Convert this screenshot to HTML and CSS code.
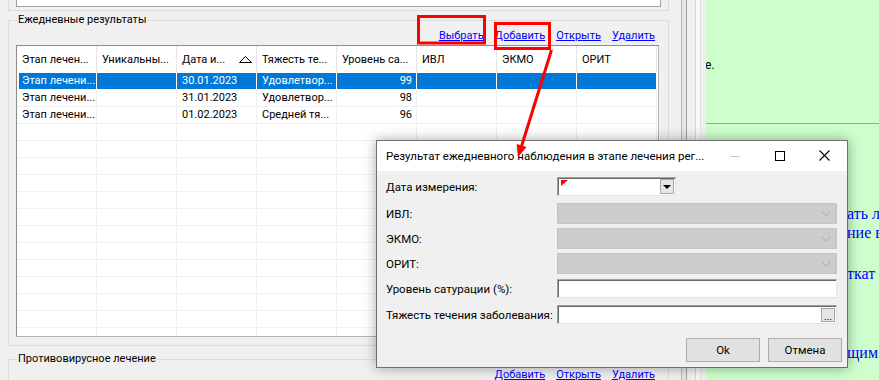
FILE: index.html
```html
<!DOCTYPE html>
<html lang="ru">
<head>
    <meta charset="UTF-8">
    <meta name="viewport" content="width=device-width, initial-scale=1.0">
    <title>Ежедневные результаты</title>
    <link rel="stylesheet" href="styles.css">
</head>
<body>

<div class="screen">
    <div class="workspace">
        <div class="top-group">
            <div class="top-box"></div>
        </div>

        <fieldset class="group group-daily">
            <legend>Ежедневные результаты</legend>
            <div class="links">
                <a href="#">Выбрать</a>
                <a href="#">Добавить</a>
                <a href="#">Открыть</a>
                <a href="#">Удалить</a>
            </div>
            <div class="grid">
                <div class="grid-row grid-head">
                    <div class="cell">Этап лечен...</div>
                    <div class="cell">Уникальны...</div>
                    <div class="cell cell-sort">Дата и...
                        <svg width="13" height="8" viewBox="0 0 13 8"><path d="M0.5 7.5 L6.5 1.5 L12.5 7.5 Z" fill="none" stroke="#000"/></svg>
                    </div>
                    <div class="cell">Тяжесть те...</div>
                    <div class="cell">Уровень са...</div>
                    <div class="cell">ИВЛ</div>
                    <div class="cell">ЭКМО</div>
                    <div class="cell">ОРИТ</div>
                </div>
                <div class="grid-row selected">
                    <div class="cell">Этап лечени...</div>
                    <div class="cell"></div>
                    <div class="cell">30.01.2023</div>
                    <div class="cell">Удовлетвор...</div>
                    <div class="cell num">99</div>
                    <div class="cell"></div>
                    <div class="cell"></div>
                    <div class="cell"></div>
                </div>
                <div class="grid-row">
                    <div class="cell">Этап лечени...</div>
                    <div class="cell"></div>
                    <div class="cell">31.01.2023</div>
                    <div class="cell">Удовлетвор...</div>
                    <div class="cell num">98</div>
                    <div class="cell"></div>
                    <div class="cell"></div>
                    <div class="cell"></div>
                </div>
                <div class="grid-row">
                    <div class="cell">Этап лечени...</div>
                    <div class="cell"></div>
                    <div class="cell">01.02.2023</div>
                    <div class="cell">Средней тя...</div>
                    <div class="cell num">96</div>
                    <div class="cell"></div>
                    <div class="cell"></div>
                    <div class="cell"></div>
                </div>
                <div class="grid-row"><div class="cell"></div><div class="cell"></div><div class="cell"></div><div class="cell"></div><div class="cell"></div><div class="cell"></div><div class="cell"></div><div class="cell"></div></div>
                <div class="grid-row"><div class="cell"></div><div class="cell"></div><div class="cell"></div><div class="cell"></div><div class="cell"></div><div class="cell"></div><div class="cell"></div><div class="cell"></div></div>
                <div class="grid-row"><div class="cell"></div><div class="cell"></div><div class="cell"></div><div class="cell"></div><div class="cell"></div><div class="cell"></div><div class="cell"></div><div class="cell"></div></div>
                <div class="grid-row"><div class="cell"></div><div class="cell"></div><div class="cell"></div><div class="cell"></div><div class="cell"></div><div class="cell"></div><div class="cell"></div><div class="cell"></div></div>
                <div class="grid-row"><div class="cell"></div><div class="cell"></div><div class="cell"></div><div class="cell"></div><div class="cell"></div><div class="cell"></div><div class="cell"></div><div class="cell"></div></div>
                <div class="grid-row"><div class="cell"></div><div class="cell"></div><div class="cell"></div><div class="cell"></div><div class="cell"></div><div class="cell"></div><div class="cell"></div><div class="cell"></div></div>
                <div class="grid-row"><div class="cell"></div><div class="cell"></div><div class="cell"></div><div class="cell"></div><div class="cell"></div><div class="cell"></div><div class="cell"></div><div class="cell"></div></div>
                <div class="grid-row"><div class="cell"></div><div class="cell"></div><div class="cell"></div><div class="cell"></div><div class="cell"></div><div class="cell"></div><div class="cell"></div><div class="cell"></div></div>
                <div class="grid-row"><div class="cell"></div><div class="cell"></div><div class="cell"></div><div class="cell"></div><div class="cell"></div><div class="cell"></div><div class="cell"></div><div class="cell"></div></div>
                <div class="grid-row"><div class="cell"></div><div class="cell"></div><div class="cell"></div><div class="cell"></div><div class="cell"></div><div class="cell"></div><div class="cell"></div><div class="cell"></div></div>
                <div class="grid-row"><div class="cell"></div><div class="cell"></div><div class="cell"></div><div class="cell"></div><div class="cell"></div><div class="cell"></div><div class="cell"></div><div class="cell"></div></div>
                <div class="grid-row"><div class="cell"></div><div class="cell"></div><div class="cell"></div><div class="cell"></div><div class="cell"></div><div class="cell"></div><div class="cell"></div><div class="cell"></div></div>
                <div class="grid-row"><div class="cell"></div><div class="cell"></div><div class="cell"></div><div class="cell"></div><div class="cell"></div><div class="cell"></div><div class="cell"></div><div class="cell"></div></div>
            </div>
        </fieldset>

        <fieldset class="group group-antiviral">
            <legend>Противовирусное лечение</legend>
            <div class="links">
                <a href="#">Добавить</a>
                <a href="#">Открыть</a>
                <a href="#">Удалить</a>
            </div>
        </fieldset>
    </div>

    <div class="splitter">
        <div class="splitter-bar"></div>
        <div class="splitter-edge"></div>
    </div>

    <div class="green-panel">
        <div class="green-note">е.</div>
        <hr class="green-rule">
        <p class="green-line first">ать лечение</p>
        <p class="green-line">ние в</p>
        <p class="green-line gap">ткат</p>
        <p class="green-line last">щим</p>
    </div>
</div>

<div class="dialog">
    <div class="dialog-title">
        <span class="dialog-caption">Результат ежедневного наблюдения в этапе лечения рег...</span>
        <div class="title-buttons">
            <span class="tb"><svg width="10" height="10" viewBox="0 0 10 10"><line x1="0" y1="5.5" x2="10" y2="5.5" stroke="#c6c6c6"/></svg></span>
            <span class="tb"><svg width="10" height="10" viewBox="0 0 10 10"><rect x="0.5" y="0.5" width="9" height="9" fill="none" stroke="#000"/></svg></span>
            <span class="tb"><svg width="11" height="11" viewBox="0 0 11 11"><path d="M0.5 0.5 L10.5 10.5 M10.5 0.5 L0.5 10.5" stroke="#000" stroke-width="1.1"/></svg></span>
        </div>
    </div>
    <div class="dialog-body">
        <div class="form-row row-date">
            <label>Дата измерения:</label>
            <div class="datepicker">
                <span class="flag"></span>
                <span class="drop-btn"><span class="drop-arrow"></span></span>
            </div>
        </div>
        <div class="form-row row-gap">
            <label>ИВЛ:</label>
            <div class="combo">
                <svg width="10" height="6" viewBox="0 0 10 6"><path d="M0.5 0.5 L5 5 L9.5 0.5" fill="none" stroke="#ababab"/></svg>
            </div>
        </div>
        <div class="form-row">
            <label>ЭКМО:</label>
            <div class="combo">
                <svg width="10" height="6" viewBox="0 0 10 6"><path d="M0.5 0.5 L5 5 L9.5 0.5" fill="none" stroke="#ababab"/></svg>
            </div>
        </div>
        <div class="form-row">
            <label>ОРИТ:</label>
            <div class="combo">
                <svg width="10" height="6" viewBox="0 0 10 6"><path d="M0.5 0.5 L5 5 L9.5 0.5" fill="none" stroke="#ababab"/></svg>
            </div>
        </div>
        <div class="form-row row-sat">
            <label>Уровень сатурации (%):</label>
            <div class="textbox"></div>
        </div>
        <div class="form-row row-gap">
            <label>Тяжесть течения заболевания:</label>
            <div class="textbox">
                <span class="dots-btn">...</span>
            </div>
        </div>
        <div class="dialog-buttons">
            <button class="win-btn">Ok</button>
            <button class="win-btn">Отмена</button>
        </div>
    </div>
</div>

<svg class="annotations" width="879" height="380" viewBox="0 0 879 380">
    <rect x="418.5" y="16.5" width="66" height="26.5" fill="none" stroke="#ff0000" stroke-width="3"/>
    <rect x="495.5" y="23.5" width="54" height="25" fill="none" stroke="#ff0000" stroke-width="3"/>
    <line x1="551.5" y1="50" x2="521.6" y2="146" stroke="#ff0000" stroke-width="3"/>
    <polygon points="518,157 526.6,147 516.6,144" fill="#ff0000"/>
</svg>

</body>
</html>
```

FILE: styles.css
```css
* {
    box-sizing: border-box;
}

body {
    margin: 0;
    width: 879px;
    height: 380px;
    overflow: hidden;
    position: relative;
    font-family: Roboto, "Noto Sans", sans-serif;
    font-size: 11px;
    color: #000;
    background: #f0f0f0;
}

.screen {
    display: flex;
    height: 380px;
}

.workspace {
    width: 669px;
    flex: none;
}

.top-group {
    height: 11px;
    margin-left: 8px;
    padding: 0 7px;
    border: 1px solid #dcdcdc;
    border-top: none;
}

.top-box {
    height: 7px;
    background: #fff;
    border: 1px solid #a0a0a0;
    border-top: none;
}

/* group boxes */
.group {
    margin: 0 0 0 8px;
    padding: 0 9px 8px 7px;
    border: 1px solid #dcdcdc;
    min-width: 0;
}

.group legend {
    margin-left: 1px;
    padding: 0 1px;
    line-height: 16px;
}

.group-daily {
    margin-top: 1px;
}

.group-antiviral {
    margin-top: 5px;
    height: 40px;
}

.links {
    display: flex;
    justify-content: flex-end;
    gap: 11px;
    padding-right: 4px;
    line-height: 16px;
}

.links a {
    color: #0000ff;
    text-decoration: underline;
}

/* data grid */
.grid {
    margin-top: 1px;
    width: 643px;
    height: 292px;
    overflow: hidden;
    background: #fff;
    border: 1px solid;
    border-color: #8c8c8c #b4b4b4 #b4b4b4 #8c8c8c;
}

.grid-row {
    display: grid;
    grid-template-columns: repeat(8, 80px);
    height: 17px;
}

.cell {
    padding: 0 1px 0 5px;
    line-height: 16px;
    white-space: nowrap;
    overflow: hidden;
    border-right: 1px solid #f0f0f0;
    border-bottom: 1px solid #f0f0f0;
}

.cell.num {
    text-align: right;
    padding-right: 4px;
}

.grid-head {
    height: 27px;
}

.grid-head .cell {
    line-height: 27px;
    border-right-color: #e5e5e5;
    border-bottom-color: #fff;
}

.cell-sort {
    display: flex;
    justify-content: space-between;
    align-items: center;
    padding-right: 4px;
}

.selected .cell {
    background: #0078d7;
    color: #fff;
    border-right-color: #fff;
    border-bottom-color: #fff;
}

.selected .cell:first-child {
    box-shadow: inset 2px 0 0 #fff;
}

/* splitter between panels */
.splitter {
    width: 37px;
    flex: none;
    display: flex;
    padding-left: 12px;
}

.splitter-bar {
    width: 6px;
    background: #e6e6e6;
    border-left: 1px solid #b9b9b9;
    border-right: 1px solid #a0a0a0;
}

.splitter-edge {
    width: 6px;
    margin-left: 8px;
    background: #f8f8f8;
    border-left: 1px solid #d4d4d4;
    border-right: 1px solid #e2e2e2;
}

/* right green panel */
.green-panel {
    flex: 1;
    background: #ccffcc;
    overflow: hidden;
}

.green-note {
    margin-top: 57px;
    margin-left: -1px;
    font-size: 12px;
    line-height: 16px;
}

.green-rule {
    margin: 50px 0 0;
    border: none;
    border-top: 1px solid #a0a0a0;
}

.green-line {
    margin: 0;
    padding-left: 141px;
    font-family: "Liberation Serif", serif;
    font-size: 16px;
    line-height: 19px;
    color: #0000ff;
    white-space: nowrap;
}

.green-line.first {
    margin-top: 80px;
}

.green-line.gap {
    margin-top: 22px;
}

.green-line.last {
    margin-top: 60px;
}

/* dialog window */
.dialog {
    position: absolute;
    left: 376px;
    top: 140px;
    width: 472px;
    height: 228px;
    font-size: 11.5px;
    background: #f0f0f0;
    border: 1px solid #6f6f6f;
    box-shadow: 0 0 12px rgba(0, 0, 0, 0.35);
}

.dialog-title {
    display: flex;
    align-items: center;
    height: 30px;
    background: #fff;
}

.dialog-caption {
    flex: 1;
    min-width: 0;
    overflow: hidden;
    padding-left: 9px;
    white-space: nowrap;
}

.title-buttons {
    display: flex;
    flex: none;
    align-self: stretch;
}

.tb {
    width: 45px;
    display: flex;
    align-items: center;
    justify-content: center;
    padding-bottom: 1px;
}

.dialog-body {
    padding: 6px 10px 0 9px;
}

.form-row {
    display: flex;
    align-items: center;
    margin-top: 4px;
}

.form-row label {
    width: 171px;
    flex: none;
    white-space: nowrap;
}

.row-date {
    margin-top: 0;
}

.row-gap {
    margin-top: 7px;
}

.row-sat {
    margin-top: 5px;
}

.datepicker {
    width: 119px;
    height: 19px;
    display: flex;
    align-items: flex-start;
    background: #fff;
    border: 1px solid;
    border-color: #a0a0a0 #e3e3e3 #e3e3e3 #a0a0a0;
    box-shadow: inset 1px 1px 0 #696969;
}

.flag {
    width: 0;
    height: 0;
    margin: 2px 0 0 3px;
    border-top: 6px solid #ff0000;
    border-right: 7px solid transparent;
}

.drop-btn {
    width: 14px;
    height: 15px;
    margin: 1px 1px 0 auto;
    display: flex;
    align-items: center;
    justify-content: center;
    background: #e6e6e6;
    border: 1px solid #a6a6a6;
}

.drop-arrow {
    width: 0;
    height: 0;
    border-left: 4px solid transparent;
    border-right: 4px solid transparent;
    border-top: 4px solid #000;
}

.combo {
    flex: 1;
    height: 21px;
    display: flex;
    align-items: center;
    justify-content: flex-end;
    padding-right: 5px;
    background: #cccccc;
    border: 1px solid #c4c4c4;
}

.textbox {
    flex: 1;
    height: 19px;
    display: flex;
    align-items: center;
    justify-content: flex-end;
    background: #fff;
    border: 1px solid;
    border-color: #a0a0a0 #e3e3e3 #e3e3e3 #a0a0a0;
    box-shadow: inset 1px 1px 0 #696969;
}

.dots-btn {
    width: 14px;
    height: 14px;
    margin-right: 1px;
    font-size: 10px;
    line-height: 15px;
    text-align: center;
    background: #e6e6e6;
    border: 1px solid #a6a6a6;
}

.dialog-buttons {
    display: flex;
    justify-content: flex-end;
    gap: 8px;
    margin-top: 14px;
    margin-right: -5px;
}

.win-btn {
    width: 74px;
    height: 24px;
    padding: 0;
    font: inherit;
    color: #000;
    background: #e1e1e1;
    border: 1px solid #adadad;
}

/* annotation marks drawn over the screenshot */
.annotations {
    position: absolute;
    left: 0;
    top: 0;
    pointer-events: none;
}
```
